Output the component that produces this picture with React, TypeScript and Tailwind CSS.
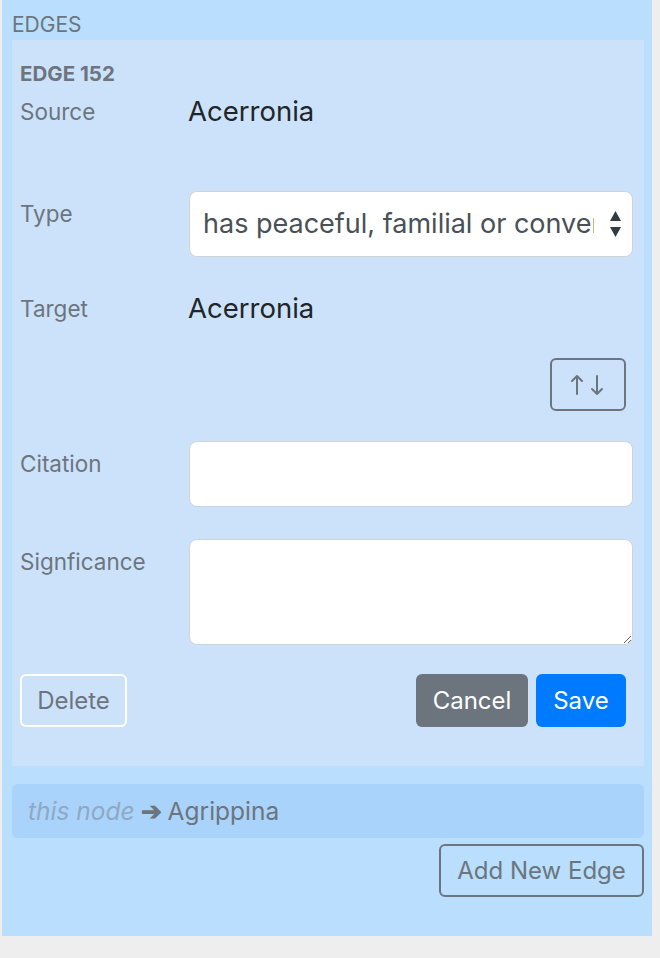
import React from "react";

const font = { fontFamily: "Inter, 'Liberation Sans', sans-serif" };

function Label({ children, pt = "pt-[6px]" }: { children: React.ReactNode; pt?: string }) {
  return (
    <div className={`w-[168px] shrink-0 ${pt} text-[22.5px] leading-[34px] text-[#6c757d]`}>{children}</div>
  );
}

export default function App() {
  return (
    <div className="min-h-[958px] bg-[#eeeeee]" style={font}>
      <div className="ml-[2px] w-[650px] h-[936px] bg-[#b9defe] flex flex-col">
        <div className="h-[40px] pt-[10px] px-[10px] text-[21px] leading-[30px] text-[#6c757d]">EDGES</div>
        <div className="mx-[10px] w-[632px] h-[726px] bg-[#cce2fb] px-[8px] flex flex-col">
          <div className="mt-[20px] h-[28px] text-[20.5px] leading-[28px] font-bold text-[#6c757d]">EDGE 152</div>
          <div className="mt-[2px] flex h-[42px]">
            <Label pt="pt-[5px]">Source</Label>
            <div className="text-[27.5px] leading-[42px] text-[#212529]">Acerronia</div>
          </div>
          <div className="mt-[59px] flex h-[66px]">
            <Label>Type</Label>
            <div className="relative ml-[1px] w-[444px] h-[66px] bg-white border-[1.5px] border-[#ced4da] rounded-[8px] flex items-center pl-[13px] pr-[38px] overflow-hidden">
              <span className="whitespace-nowrap overflow-hidden text-[27px] leading-[40px] text-[#495057]">
                has peaceful, familial or convenient relationship with
              </span>
              <svg className="absolute right-[10px] top-[18px]" width="13" height="28" viewBox="0 0 13 28">
                <path d="M6.5 1 L12 11 L1 11 Z" fill="#343a40" />
                <path d="M1 17 L12 17 L6.5 27 Z" fill="#343a40" />
              </svg>
            </div>
          </div>
          <div className="mt-[30px] flex h-[42px]">
            <Label pt="pt-[5px]">Target</Label>
            <div className="text-[27.5px] leading-[42px] text-[#212529]">Acerronia</div>
          </div>
          <div className="mt-[29px] flex justify-end pr-[10px]">
            <button className="w-[76px] h-[53px] border-2 border-[#6c757d] rounded-[6px] flex items-center justify-center">
              <svg width="34" height="22" viewBox="0 0 34 22" fill="none" stroke="#6c757d" strokeWidth="2" strokeLinecap="round" strokeLinejoin="round">
                <path d="M6 20 V2 M1 7 L6 2 L11 7" />
                <path d="M26 2 V20 M21 15 L26 20 L31 15" />
              </svg>
            </button>
          </div>
          <div className="mt-[30px] flex h-[66px]">
            <Label>Citation</Label>
            <input className="ml-[1px] w-[444px] h-[66px] bg-white border-[1.5px] border-[#ced4da] rounded-[8px] outline-none" />
          </div>
          <div className="mt-[32px] flex h-[106px]">
            <Label>Signficance</Label>
            <textarea className="ml-[1px] w-[444px] h-[106px] bg-white border-[1.5px] border-[#ced4da] rounded-[8px] outline-none" />
          </div>
          <div className="mt-[29px] flex items-center pr-[10px]">
            <button className="w-[107px] h-[53px] border-2 border-white rounded-[6px] text-[24px] text-[#6c757d]">Delete</button>
            <div className="flex-1" />
            <button className="w-[112px] h-[53px] rounded-[6px] bg-[#6c757d] text-[24px] text-white">Cancel</button>
            <button className="ml-[8px] w-[90px] h-[53px] rounded-[6px] bg-[#007bff] text-[24px] text-white">Save</button>
          </div>
        </div>
        <div className="mt-[18px] mx-[10px] w-[632px] h-[54px] rounded-[6px] bg-[#a9d3fb] flex items-center px-[16px] text-[24.5px]">
          <span className="italic text-[#8fa9c4]">this node</span>
          <span className="ml-[6px] font-bold text-[#6c757d]">➔</span>
          <span className="ml-[6px] text-[#6c757d]">Agrippina</span>
        </div>
        <div className="mt-[6px] flex justify-end pr-[8px]">
          <button className="w-[205px] h-[53px] border-2 border-[#6c757d] rounded-[6px] text-[24px] text-[#6c757d]">Add New Edge</button>
        </div>
      </div>
    </div>
  );
}
